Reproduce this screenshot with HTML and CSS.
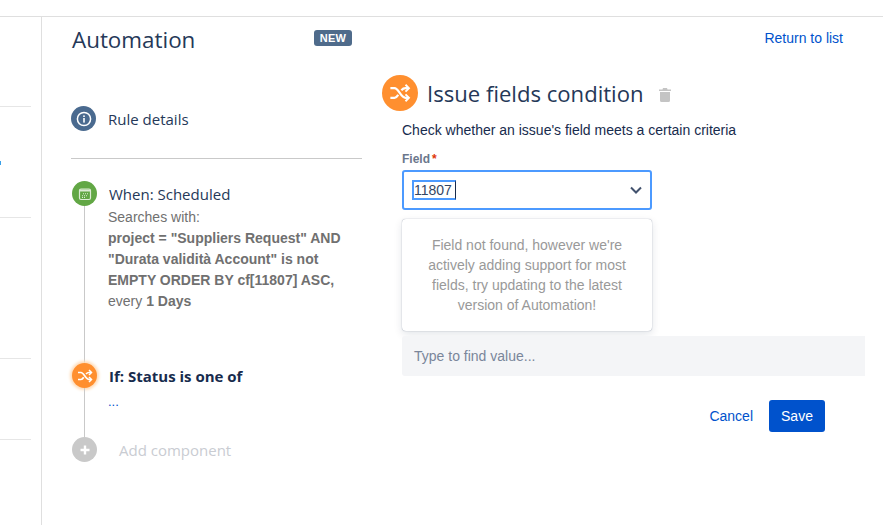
FILE: index.html
```html
<!DOCTYPE html>
<html lang="en">
<head>
  <meta charset="UTF-8">
  <meta name="viewport" content="width=device-width, initial-scale=1.0">
  <title>Automation</title>
  <link rel="stylesheet" href="styles.css">
</head>
<body>
  <div class="topbar"></div>
  <div class="page">
    <!-- cut off left nav -->
    <aside class="sidenav">
      <div class="nav-item nav-first"></div>
      <div class="nav-item nav-second"><span class="nav-clip"></span></div>
      <div class="nav-item nav-third"></div>
      <div class="nav-item nav-fourth"></div>
    </aside>

    <main class="content">
      <section class="rule-col">
        <div class="rule-head">
          <h1>Automation</h1>
          <span class="badge">NEW</span>
        </div>

        <div class="rule-details">
          <span class="dot dot-blue">
            <svg width="16" height="16" viewBox="0 0 16 16" fill="none">
              <circle cx="8" cy="8" r="6.6" stroke="#fff" stroke-width="1.5"/>
              <rect x="7.2" y="7" width="1.6" height="4.6" fill="#fff"/>
              <rect x="7.2" y="4.4" width="1.6" height="1.6" fill="#fff"/>
            </svg>
          </span>
          <span class="step-title">Rule details</span>
        </div>

        <div class="timeline">
          <div class="step step-when">
            <div class="rail">
              <span class="dot dot-green">
                <svg width="14" height="14" viewBox="0 0 14 14" fill="none">
                  <rect x="1.500" y="2" width="11" height="10.500" rx="1.500" stroke="#dcebd4" stroke-width="1.200"/>
                  <rect x="2" y="2.500" width="10" height="2" fill="#dcebd4"/>
                  <path d="M5 6.200h1v1H5zM7 6.200h1v1H7zM9 6.200h1v1H9zM4 8.200h1v1H4zM6 8.200h1v1H6zM8 8.200h1v1H8zM4 10h1v1H4zM6 10h1v1H6z" fill="#dcebd4"/>
                </svg>
              </span>
              <span class="rail-line"></span>
            </div>
            <div class="step-body">
              <div class="step-title">When: Scheduled</div>
              <p class="step-desc">Searches with:<br><b>project = "Suppliers Request" AND "Durata validità Account" is not EMPTY ORDER BY cf[11807] ASC,</b> every <b>1 Days</b></p>
            </div>
          </div>

          <div class="step step-if">
            <div class="rail">
              <span class="dot dot-orange dot-active">
                <svg width="16" height="16" viewBox="0 0 16 16" fill="none" stroke="#fff" stroke-width="1.700">
                  <path d="M1 4.500h3c3 0 4.500 7 8 7h2"/>
                  <path d="M1 11.500h3c1.200 0 2-1 2.700-2.200M9 6c.8-.9 1.700-1.500 3-1.500h2"/>
                  <path d="M12 2l2.500 2.500L12 7M12 9l2.500 2.500L12 14" stroke-width="1.500"/>
                </svg>
              </span>
              <span class="rail-line"></span>
            </div>
            <div class="step-body">
              <div class="step-title step-strong">If: Status is one of</div>
              <a class="step-more" href="#">...</a>
            </div>
          </div>

          <div class="step step-add">
            <div class="rail">
              <span class="dot dot-grey">
                <svg width="12" height="12" viewBox="0 0 12 12"><path d="M4.800 1.500h2.400v3.300h3.300v2.400H7.200v3.300H4.800V7.200H1.500V4.800h3.300z" fill="#fff"/></svg>
              </span>
            </div>
            <div class="step-title add-label">Add component</div>
          </div>
        </div>
      </section>

      <section class="form-col">
        <a class="return-link" href="#">Return to list</a>

        <div class="form-head">
          <span class="dot dot-orange dot-big">
            <svg width="22" height="22" viewBox="0 0 16 16" fill="none" stroke="#fff" stroke-width="1.600">
              <path d="M1 4.500h3c3 0 4.500 7 8 7h2"/>
              <path d="M1 11.500h3c1.200 0 2-1 2.700-2.200M9 6c.8-.9 1.700-1.500 3-1.500h2"/>
              <path d="M12 2l2.500 2.500L12 7M12 9l2.500 2.500L12 14" stroke-width="1.400"/>
            </svg>
          </span>
          <h2>Issue fields condition</h2>
          <svg class="trash" width="14" height="14" viewBox="0 0 14 14" fill="#c4c4c4">
            <path d="M5 0h4l.5 1.500H13V3H1V1.500h3.500z"/>
            <path d="M2 4h10v8.500A1.500 1.500 0 0 1 10.500 14h-7A1.500 1.500 0 0 1 2 12.500z"/>
          </svg>
        </div>

        <div class="form-body">
          <p class="form-desc">Check whether an issue's field meets a certain criteria</p>
          <label class="field-label">Field<span class="req">*</span></label>
          <div class="select">
            <span class="select-value">11807</span>
            <svg width="14" height="14" viewBox="0 0 14 14" fill="none" stroke="#42526e" stroke-width="2"><path d="M2 4.500l5 5 5-5"/></svg>
          </div>
          <div class="menu">Field not found, however we're actively adding support for most fields, try updating to the latest version of Automation!</div>
          <div class="value-input">Type to find value...</div>
          <div class="actions">
            <a class="cancel" href="#">Cancel</a>
            <button class="save">Save</button>
          </div>
        </div>
      </section>
    </main>
  </div>
</body>
</html>
```

FILE: styles.css
```css
* {
  box-sizing: border-box;
  margin: 0;
  padding: 0;
}
html, body {
  height: 525px;
  overflow: hidden;
}
body {
  background-color: #fff;
  color: #172b4d;
  font-family: 'Liberation Sans', Arial, sans-serif;
  font-size: 14px;
}
a {
  color: #0052cc;
  text-decoration: none;
}
.topbar {
  height: 17px;
  border-bottom: 1px solid #dfdfdf;
}
.page {
  display: flex;
  height: 508px;
}

/* left nav */
.sidenav {
  width: 42px;
  flex-shrink: 0;
  border-right: 1px solid #dfdfdf;
  padding-right: 10px;
}
.nav-item {
  border-bottom: 1px solid #e6e6e6;
}
.nav-first { height: 90px; }
.nav-second { height: 111px; padding-top: 54px; }
.nav-third { height: 141px; }
.nav-fourth { height: 81px; }
.nav-clip {
  display: block;
  width: 1px;
  height: 4px;
  background-color: #3aa0e8;
}

.content {
  display: flex;
  flex: 1;
  padding-left: 30px;
}

/* timeline column */
.rule-col {
  width: 290px;
  flex-shrink: 0;
}
.rule-head {
  display: flex;
  justify-content: space-between;
  align-items: flex-start;
  height: 84px;
  padding-top: 6px;
  padding-right: 10px;
}
.rule-head h1 {
  font-family: 'Open Sans', sans-serif;
  font-size: 22.4px;
  font-weight: 400;
  line-height: 33px;
  color: #253858;
}
.badge {
  margin-top: 7px;
  padding: 0 6px;
  height: 16px;
  line-height: 16px;
  border-radius: 3px;
  background-color: #4f6b8b;
  color: #fff;
  font-size: 11px;
  font-weight: bold;
  letter-spacing: .2px;
}
.rule-details {
  display: flex;
  align-items: flex-start;
  gap: 12px;
  height: 58px;
  margin-left: -1px;
  padding-top: 5px;
  border-bottom: 1px solid #c9c9c9;
}
.rule-details .step-title {
  line-height: 26px;
}
.dot {
  display: flex;
  align-items: center;
  justify-content: center;
  flex-shrink: 0;
  width: 25px;
  height: 25px;
  border-radius: 50%;
}
.dot-blue { background-color: #4a6a8f; }
.dot-green { background-color: #62a745; }
.dot-orange { background-color: #ff8f2f; }
.dot-grey { background-color: #c9c9c9; }
.dot-active { box-shadow: 0 0 3px 2px #ffdcb8; }
.dot-big {
  width: 36px;
  height: 36px;
}
.step-title {
  font-family: 'Open Sans', sans-serif;
  font-size: 15px;
  line-height: 20px;
  color: #253858;
}
.timeline {
  padding-top: 22px;
}
.step {
  display: flex;
  gap: 11px;
}
.rail {
  display: flex;
  flex-direction: column;
  align-items: center;
  width: 25px;
  flex-shrink: 0;
}
.rail-line {
  flex: 1;
  width: 1px;
  background-color: #c9c9c9;
}
.step-body {
  padding-top: 3px;
}
.step-body .step-title {
  margin-left: 1px;
}
.step-when { height: 182px; }
.step-if { height: 74px; }
.step-desc {
  margin-top: 3px;
  color: #707070;
  line-height: 21px;
  width: 250px;
}
.step-strong {
  font-weight: 700;
  color: #172b4d;
}
.step-more {
  display: block;
  font-size: 13px;
  line-height: 20px;
  margin-top: 6px;
}
.step-add {
  align-items: center;
}
.add-label {
  margin-left: 11px;
  color: #c9ccd2;
}

/* form column */
.form-col {
  position: relative;
  flex: 1;
  padding: 58px 0 0 20px;
}
.return-link {
  position: absolute;
  top: 13px;
  right: 40px;
  line-height: 16px;
}
.form-head {
  display: flex;
  align-items: center;
  height: 36px;
}
.form-head h2 {
  margin-left: 9px;
  font-family: 'Open Sans', sans-serif;
  font-size: 22.1px;
  font-weight: 400;
  color: #253858;
}
.trash {
  margin-left: 14px;
  margin-top: 4px;
}
.form-body {
  padding-left: 20px;
  padding-right: 18px;
}
.form-desc {
  margin-top: 9px;
  line-height: 20px;
  color: #172b4d;
}
.field-label {
  display: block;
  margin-top: 11px;
  font-size: 12px;
  font-weight: bold;
  line-height: 16px;
  color: #6b778c;
}
.req {
  margin-left: 2px;
  color: #de350b;
}
.select {
  display: flex;
  align-items: center;
  justify-content: space-between;
  width: 250px;
  height: 40px;
  margin-top: 3px;
  padding: 0 7px 0 8px;
  border: 2px solid #4c9aff;
  border-radius: 3px;
}
.select-value {
  width: 44px;
  height: 20px;
  line-height: 16px;
  border: 2px solid #4c9aff;
  border-right: 1px solid #172b4d;
  color: #344563;
}
.menu {
  width: 250px;
  height: 112px;
  margin-top: 9px;
  padding: 16px 20px;
  border-radius: 4px;
  background-color: #fff;
  box-shadow: 0 0 1px rgba(9,30,66,.5), 0 3px 8px rgba(9,30,66,.12);
  color: #999;
  line-height: 20px;
  text-align: center;
}
.value-input {
  height: 40px;
  margin-top: 5px;
  padding: 0 12px;
  border-radius: 3px 0 0 3px;
  background-color: #f4f5f7;
  color: #7a869a;
  line-height: 41px;
}
.actions {
  display: flex;
  align-items: center;
  justify-content: flex-end;
  gap: 16px;
  margin-top: 24px;
  padding-right: 40px;
}
.save {
  width: 56px;
  height: 32px;
  border: none;
  border-radius: 3px;
  background-color: #0052cc;
  color: #fff;
  font-family: inherit;
  font-size: 14px;
}
```
